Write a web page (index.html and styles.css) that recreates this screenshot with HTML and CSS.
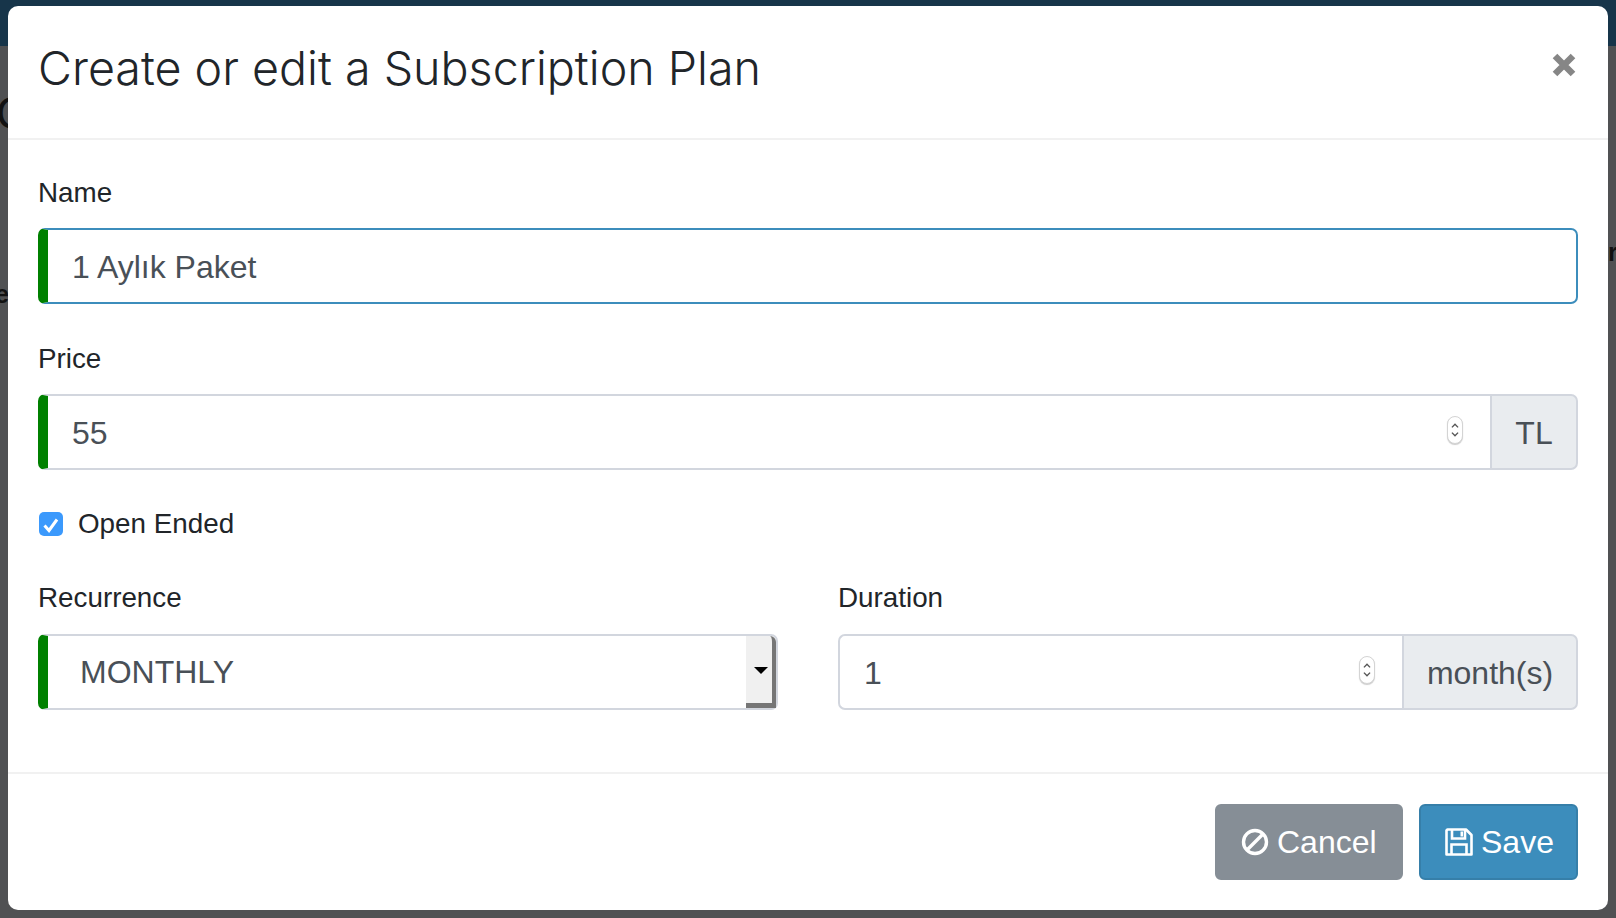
FILE: index.html
```html
<!DOCTYPE html>
<html lang="en">
<head>
<meta charset="UTF-8">
<meta name="viewport" content="width=device-width, initial-scale=1.0">
<title>Subscription Plans</title>
<link rel="stylesheet" href="styles.css">
</head>
<body>

<div class="topbar"></div>
<span class="peek peek-heading">C</span>
<span class="peek peek-left">e</span>
<span class="peek peek-right">r</span>

<div class="modal">
    <div class="modal-header">
        <h4 class="modal-title">Create or edit a Subscription Plan</h4>
        <button class="close" type="button" aria-label="Close">
            <svg width="24" height="24" viewBox="0 0 24 24"><path d="M3 3L21 21M21 3L3 21" stroke="#868686" stroke-width="6.5" fill="none"/></svg>
        </button>
    </div>

    <div class="modal-body">
        <div class="form-group">
            <label class="form-label">Name</label>
            <input class="form-control required focused" type="text" value="1 Aylık Paket">
        </div>

        <div class="form-group">
            <label class="form-label">Price</label>
            <div class="input-group">
                <div class="input-wrap">
                    <input class="form-control required" type="text" value="55">
                    <span class="spinner">
                        <svg width="16" height="28" viewBox="0 0 16 28"><path d="M4.5 11L8 7.5L11.5 11M4.5 17L8 20.5L11.5 17" stroke="#555" stroke-width="1.6" fill="none"/></svg>
                    </span>
                </div>
                <span class="addon addon-tl">TL</span>
            </div>
        </div>

        <label class="check-row">
            <span class="checkbox">
                <svg width="24" height="24" viewBox="0 0 24 24"><path d="M5.5 12.5L10 17.5L18 6.5" stroke="#fff" stroke-width="3" fill="none"/></svg>
            </span>
            Open Ended
        </label>

        <div class="form-row">
            <div class="form-col">
                <label class="form-label">Recurrence</label>
                <div class="select-wrap">
                    <select class="form-control required select-control">
                        <option>MONTHLY</option>
                    </select>
                    <span class="select-button"><i class="select-arrow"></i></span>
                </div>
            </div>
            <div class="form-col">
                <label class="form-label">Duration</label>
                <div class="input-group">
                    <div class="input-wrap">
                        <input class="form-control duration-input" type="text" value="1">
                        <span class="spinner">
                            <svg width="16" height="28" viewBox="0 0 16 28"><path d="M4.5 11L8 7.5L11.5 11M4.5 17L8 20.5L11.5 17" stroke="#555" stroke-width="1.6" fill="none"/></svg>
                        </span>
                    </div>
                    <span class="addon addon-month">month(s)</span>
                </div>
            </div>
        </div>
    </div>

    <div class="modal-footer">
        <button class="btn btn-cancel" type="button">
            <svg width="28" height="28" viewBox="0 0 28 28"><circle cx="14" cy="14" r="11.5" stroke="#fff" stroke-width="3.4" fill="none"/><path d="M6 22L22 6" stroke="#fff" stroke-width="3.4"/></svg>
            Cancel
        </button>
        <button class="btn btn-save" type="button">
            <svg width="28" height="28" viewBox="0 0 28 28"><path d="M2.5 1.5H21L26.5 7V26.5H1.5V2.5Z" stroke="#fff" stroke-width="2.6" fill="none" stroke-linejoin="round"/><path d="M7 2V10.5H20V2M6.5 26V16.5H21.5V26" stroke="#fff" stroke-width="2.6" fill="none"/><path d="M15.5 3.5H18V8.5H15.5Z" fill="#fff"/></svg>
            Save
        </button>
    </div>
</div>

</body>
</html>
```

FILE: styles.css
```css
body {
    font-family: "Liberation Sans", Arial, sans-serif;
    background-color: #505153;
    margin: 0;
    height: 918px;
    overflow: hidden;
    position: relative;
    color: #212529;
}

.topbar {
    height: 46px;
    background-color: #17354a;
}

/* bits of the page behind the modal */
.peek {
    position: absolute;
    color: #111;
}

.peek-heading {
    left: -4px;
    top: 86px;
    font-size: 46px;
}

.peek-left {
    left: -5px;
    top: 280px;
    font-size: 25px;
    font-weight: bold;
}

.peek-right {
    left: 1608px;
    top: 238px;
    font-size: 25px;
    font-weight: bold;
}

.modal {
    position: absolute;
    left: 8px;
    top: 6px;
    width: 1600px;
    height: 904px;
    background-color: #fff;
    border-radius: 10px;
    display: flex;
    flex-direction: column;
}

.modal-header {
    height: 134px;
    padding: 0 30px;
    border-bottom: 2px solid #f1f1f1;
    display: flex;
    align-items: center;
    justify-content: space-between;
    box-sizing: border-box;
}

.modal-title {
    margin: 0 0 9px;
    font-family: Inter, "Liberation Sans", sans-serif;
    font-weight: 300;
    font-size: 46.6px;
}

.close {
    background: none;
    border: none;
    padding: 0;
    margin: 0 2px 15px 0;
    height: 24px;
    cursor: pointer;
}

.modal-body {
    flex: 1;
    padding: 32px 30px 0;
}

.form-group {
    margin-bottom: 34px;
}

.form-label {
    display: block;
    font-size: 27.8px;
    line-height: 42px;
    margin-bottom: 14px;
}

.form-control {
    display: block;
    width: 100%;
    height: 76px;
    box-sizing: border-box;
    padding: 3px 26px 0;
    font-family: inherit;
    font-size: 32px;
    color: #495057;
    background-color: #fff;
    border: 2px solid #d2d6de;
    border-radius: 7px;
    outline: none;
}

.required {
    border-left: 10px solid green;
    padding-left: 24px;
}

.focused {
    border-color: #3c8dbc;
    border-left-color: green;
}

.input-group {
    display: flex;
}

.input-wrap {
    flex: 1;
    position: relative;
}

.input-wrap .form-control {
    border-right: none;
    border-top-right-radius: 0;
    border-bottom-right-radius: 0;
}

.duration-input {
    padding-left: 24px;
}

.spinner {
    position: absolute;
    right: 27px;
    top: 22px;
    width: 16px;
    height: 28px;
    box-sizing: border-box;
    background-color: #fff;
    border: 1px solid #d4d4d4;
    border-radius: 8px;
    box-shadow: 0 1px 1px #ccc;
    display: flex;
    align-items: center;
    justify-content: center;
}

.addon {
    height: 76px;
    box-sizing: border-box;
    display: flex;
    align-items: center;
    justify-content: center;
    padding-top: 2px;
    font-size: 32px;
    color: #495057;
    background-color: #e9ecef;
    border: 2px solid #d2d6de;
    border-radius: 0 7px 7px 0;
}

.addon-tl {
    width: 88px;
}

.addon-month {
    width: 176px;
}

.check-row {
    display: flex;
    align-items: center;
    gap: 15px;
    height: 40px;
    margin-bottom: 33px;
    font-size: 27.8px;
}

.checkbox {
    width: 24px;
    height: 24px;
    margin-left: 1px;
    background-color: #3b99fc;
    border-radius: 5px;
}

.form-row {
    display: flex;
    gap: 60px;
}

.form-row .form-label {
    margin-bottom: 15px;
}

.form-col {
    flex: 1;
}

.select-wrap {
    position: relative;
}

.select-control {
    appearance: none;
    -webkit-appearance: none;
    padding-left: 32px;
    padding-top: 0;
}

.select-button {
    position: absolute;
    right: 2px;
    top: 2px;
    width: 30px;
    height: 72px;
    box-sizing: border-box;
    background-color: #f0f0f0;
    border-right: 4px solid #767676;
    border-bottom: 5px solid #767676;
    border-radius: 0 6px 0 0;
}

.select-arrow {
    position: absolute;
    left: 8px;
    top: 31px;
    border-top: 7px solid #000;
    border-left: 7px solid transparent;
    border-right: 7px solid transparent;
}

.modal-footer {
    height: 138px;
    box-sizing: border-box;
    border-top: 2px solid #f1f1f1;
    padding: 30px 30px 0;
    display: flex;
    justify-content: flex-end;
    align-items: flex-start;
    gap: 16px;
}

.btn {
    height: 76px;
    box-sizing: border-box;
    display: flex;
    align-items: center;
    gap: 8px;
    font-family: inherit;
    font-size: 32px;
    color: #fff;
    border: 2px solid transparent;
    border-radius: 6px;
    cursor: pointer;
}

.btn-cancel {
    width: 188px;
    padding: 0 0 0 24px;
    background-color: #868e96;
    border-color: #868e96;
}

.btn-save {
    width: 159px;
    padding: 0 0 0 24px;
    background-color: #3c8dbc;
    border-color: #367fa9;
}
```
